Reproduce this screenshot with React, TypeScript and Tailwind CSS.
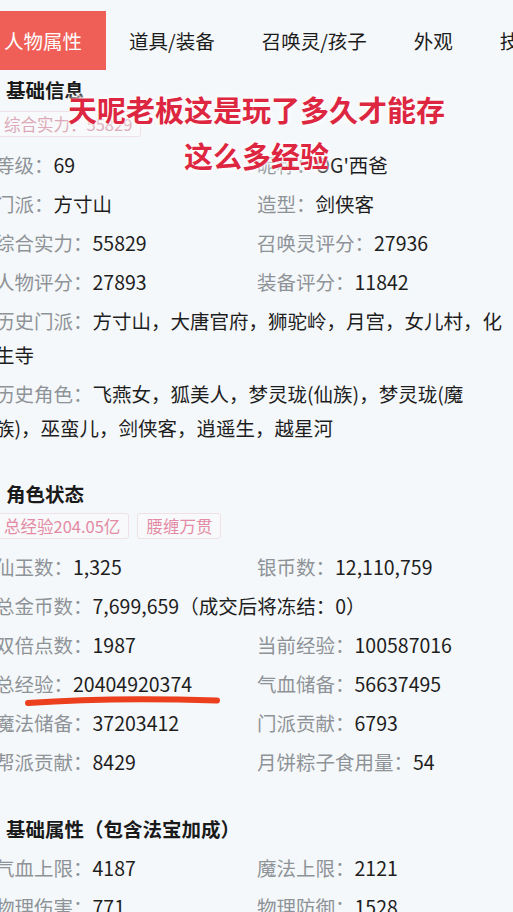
import React from "react";

const FONT = { fontFamily: '"Noto Sans CJK SC", "Noto Sans", sans-serif' };

type Item = { l: string; v: string; full?: boolean };

function Row({ it }: { it: Item }) {
  return (
    <div className={(it.full ? "col-span-2 w-[510px] " : "") + "py-[2.5px] leading-[34px] text-[19.5px] whitespace-normal"}>
      <span className="text-[#8e9398]">{it.l}：</span>
      <span className="text-[#1e1e1e]">{it.v}</span>
    </div>
  );
}

function Grid({ items }: { items: Item[] }) {
  return (
    <div className="grid grid-cols-[262px_1fr] pl-[15px]">
      {items.map((it, i) => (
        <Row key={i} it={it} />
      ))}
    </div>
  );
}

function Tag({ children, light }: { children: React.ReactNode; light?: boolean }) {
  return (
    <span
      className={
        "inline-flex items-center h-[26px] px-[8px] rounded-[3px] border border-[#efe1e5] bg-[#f8f9fa] text-[16.5px] " +
        (light ? "text-[#dcaab8]" : "text-[#e38ba4]")
      }
    >
      {children}
    </span>
  );
}

function Heading({ children }: { children: React.ReactNode }) {
  return <div className="pl-[26px] h-[30px] leading-[30px] text-[19.5px] font-bold text-[#1a1a1a]">{children}</div>;
}

export default function App() {
  const tabs = ["人物属性", "道具/装备", "召唤灵/孩子", "外观", "技能"];
  return (
    <div className="relative w-[513px] h-[912px] overflow-hidden bg-[#f5f8fa]" style={FONT}>
      <div className="-ml-[20px] w-[560px]">
        <div className="flex pt-[11px] h-[70px] whitespace-nowrap">
          {tabs.map((t, i) => (
            <div
              key={t}
              className={
                "h-[59px] flex items-center text-[19.5px] " +
                (i === 0 ? "pl-[24px] pr-[23.5px] bg-[#ef5f57] text-white" : "px-[23.5px] text-[#1c1c1c]")
              }
            >
              {t}
            </div>
          ))}
        </div>

        <div className="mt-[5px]">
          <Heading>基础信息</Heading>
          <div className="pl-[15px] mt-[6px] flex gap-[8px]">
            <Tag light>综合实力：55829</Tag>
          </div>
          <div className="mt-[8.5px]">
            <Grid
              items={[
                { l: "等级", v: "69" },
                { l: "昵称", v: "OG'西爸" },
                { l: "门派", v: "方寸山" },
                { l: "造型", v: "剑侠客" },
                { l: "综合实力", v: "55829" },
                { l: "召唤灵评分", v: "27936" },
                { l: "人物评分", v: "27893" },
                { l: "装备评分", v: "11842" },
                { l: "历史门派", v: "方寸山，大唐官府，狮驼岭，月宫，女儿村，化生寺", full: true },
                {
                  l: "历史角色",
                  v: "飞燕女，狐美人，梦灵珑(仙族)，梦灵珑(魔族)，巫蛮儿，剑侠客，逍遥生，越星河",
                  full: true,
                },
              ]}
            />
          </div>
        </div>

        <div className="mt-[31.5px]">
          <Heading>角色状态</Heading>
          <div className="pl-[15px] mt-[4px] flex gap-[8px]">
            <Tag>总经验204.05亿</Tag>
            <Tag>腰缠万贯</Tag>
          </div>
          <div className="mt-[8.5px]">
            <Grid
              items={[
                { l: "仙玉数", v: "1,325" },
                { l: "银币数", v: "12,110,759" },
                { l: "总金币数", v: "7,699,659（成交后将冻结：0）", full: true },
                { l: "双倍点数", v: "1987" },
                { l: "当前经验", v: "100587016" },
                { l: "总经验", v: "20404920374" },
                { l: "气血储备", v: "56637495" },
                { l: "魔法储备", v: "37203412" },
                { l: "门派贡献", v: "6793" },
                { l: "帮派贡献", v: "8429" },
                { l: "月饼粽子食用量", v: "54" },
              ]}
            />
          </div>
        </div>

        <div className="mt-[32.5px]">
          <Heading>基础属性（包含法宝加成）</Heading>
          <div className="mt-[4.5px]">
            <Grid
              items={[
                { l: "气血上限", v: "4187" },
                { l: "魔法上限", v: "2121" },
                { l: "物理伤害", v: "771" },
                { l: "物理防御", v: "1528" },
                { l: "法术伤害", v: "612" },
                { l: "法术防御", v: "980" },
              ]}
            />
          </div>
        </div>
      </div>

      <div
        className="absolute left-0 right-0 top-[86px] text-center text-[29px] leading-[46px] font-bold text-[#dd2741]"
        style={{ textShadow: "0 0 3px #fff, 0 0 6px rgba(255,255,255,0.9), 0 0 10px rgba(255,255,255,0.7)" }}
      >
        <div>天呢老板这是玩了多久才能存</div>
        <div>这么多经验</div>
      </div>

      <svg className="absolute left-0 top-0 pointer-events-none" width="513" height="912" viewBox="0 0 513 912">
        <path d="M28 703 Q 110 697 217 700.5" stroke="#eb3f1e" strokeWidth="6" strokeLinecap="round" fill="none" />
      </svg>
    </div>
  );
}
